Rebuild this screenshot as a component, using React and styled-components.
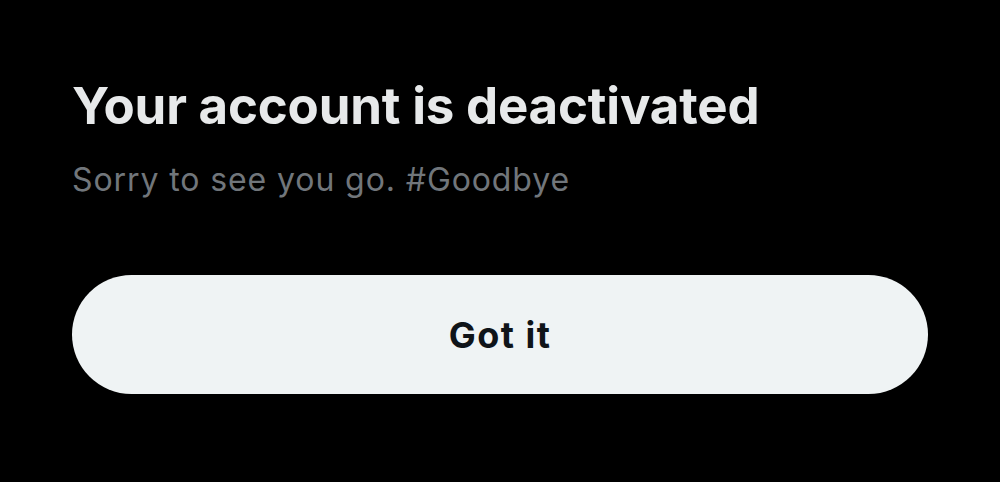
import React from 'react';
import styled, {createGlobalStyle} from 'styled-components';

const Global = createGlobalStyle`
  html, body { margin: 0; padding: 0; background: #000; }
  body { font-family: Inter, "Noto Sans", sans-serif; }
`

const Page = styled.main`
  width: 1000px;
  height: 482px;
  box-sizing: border-box;
  background: #000;
  padding: 75px 72px 0 72px;
  display: flex;
  flex-direction: column;
`

const Title = styled.h1`
  margin: 0;
  font-size: 51px;
  font-weight: 700;
  line-height: 62px;
  letter-spacing: -0.2px;
  color: #e7e9ea;
`

const Sub = styled.p`
  margin: 23px 0 0 0;
  font-size: 32px;
  font-weight: 400;
  line-height: 40px;
  letter-spacing: 0.9px;
  color: #71767b;
`

const Button = styled.button`
  margin-top: 75px;
  height: 119px;
  width: 100%;
  border: 0;
  outline: 0;
  border-radius: 60px;
  background: #eff3f4;
  color: #0f1419;
  font-family: inherit;
  font-size: 36px;
  font-weight: 700;
  letter-spacing: 1.5px;
  cursor: pointer;
  display: flex;
  justify-content: center;
  align-items: center;
`

const App = () => (
  <>
    <Global/>
    <Page>
      <Title>Your account is deactivated</Title>
      <Sub>Sorry to see you go. #Goodbye</Sub>
      <Button>Got it</Button>
    </Page>
  </>
)

export default App;
